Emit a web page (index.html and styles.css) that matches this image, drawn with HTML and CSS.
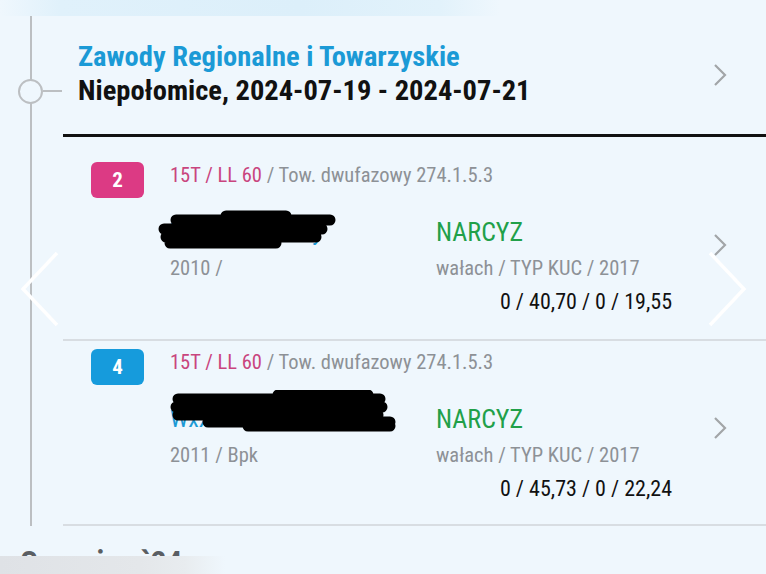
FILE: index.html
```html
<!DOCTYPE html>
<html lang="pl">
<head>
<meta charset="utf-8">
<link rel="stylesheet" href="styles.css">
</head>
<body>
<div class="topfade"></div>
<section class="group">
  <span class="node"></span>
  <header class="event">
    <div class="event-text">
      <div class="event-title">Zawody Regionalne i Towarzyskie</div>
      <div class="event-place">Niepołomice, 2024-07-19 - 2024-07-21</div>
    </div>
    <svg class="chev" viewBox="0 0 14 24" width="14" height="24"><polyline points="2,2 12,12 2,22"/></svg>
  </header>
  <article class="card card-first">
    <div class="badge badge-pink">2</div>
    <div class="card-body">
      <div class="meta"><span class="cls">15T / LL 60</span> / Tow. dwufazowy 274.1.5.3</div>
      <div class="cols">
        <div class="col-left">
          <div class="rider"><span class="rider-name">Wxxxxxxx Kxxxy</span>
            <svg class="redact" viewBox="0 0 180 40" width="180" height="40"><path d="M20 10 H174 M8 19 H166 M10 27 H160 M14 33 H120 M70 6 H130"/></svg>
          </div>
          <div class="sub">2010 /</div>
        </div>
        <div class="col-right">
          <div class="horse">NARCYZ</div>
          <div class="sub">wałach / TYP KUC / 2017</div>
          <div class="score">0 / 40,70 / 0 / 19,55</div>
        </div>
      </div>
    </div>
    <svg class="chev" viewBox="0 0 14 24" width="14" height="24"><polyline points="2,2 12,12 2,22"/></svg>
  </article>
  <article class="card">
    <div class="badge badge-blue">4</div>
    <div class="card-body">
      <div class="meta"><span class="cls">15T / LL 60</span> / Tow. dwufazowy 274.1.5.3</div>
      <div class="cols">
        <div class="col-left">
          <div class="rider"><span class="rider-name">Wxxxxxxxxx Kxxxxxxz</span>
            <svg class="redact redact-wide" viewBox="0 0 230 44" width="230" height="44"><path d="M10 9 H212 M8 17 H214 M10 25 H210 M40 32 H222 M80 36 H222 M110 5 H200"/></svg>
          </div>
          <div class="sub">2011 / Bpk</div>
        </div>
        <div class="col-right">
          <div class="horse">NARCYZ</div>
          <div class="sub">wałach / TYP KUC / 2017</div>
          <div class="score">0 / 45,73 / 0 / 22,24</div>
        </div>
      </div>
    </div>
    <svg class="chev" viewBox="0 0 14 24" width="14" height="24"><polyline points="2,2 12,12 2,22"/></svg>
  </article>
</section>
<h2 class="month">Czerwiec `24</h2>
<svg class="nav nav-prev" viewBox="0 0 40 76" width="40" height="76"><polyline points="37,2 3,38 37,74"/></svg>
<svg class="nav nav-next" viewBox="0 0 40 76" width="40" height="76"><polyline points="3,2 37,38 3,74"/></svg>
<div class="bottomfade"></div>
</body>
</html>
```
FILE: styles.css
```css
html, body {
  margin: 0;
  padding: 0;
}
body {
  width: 766px;
  height: 574px;
  overflow: hidden;
  background: #eff7fd;
  font-family: Roboto, "Noto Sans", sans-serif;
  font-stretch: 80%;
  color: #111;
  position: relative;
}
.topfade {
  height: 16px;
  background: linear-gradient(90deg, rgba(223,240,250,0) 0, #e0f1fb 60px, #dceffa 300px, #e2f2fb 440px, rgba(223,240,250,0) 500px);
}
.group {
  position: relative;
  margin-left: 30px;
  border-left: 2px solid #bcbfc2;
  padding-left: 31px;
}
.node {
  position: absolute;
  left: -14px;
  top: 63px;
  width: 21px;
  height: 21px;
  border: 2px solid #bcbfc2;
  border-radius: 50%;
  background: #eff7fd;
}
.node::after {
  content: "";
  position: absolute;
  left: 23px;
  top: 9px;
  width: 19px;
  height: 2px;
  background: #bcbfc2;
}
.event {
  display: flex;
  align-items: center;
  height: 118px;
  padding-left: 15px;
  border-bottom: 3px solid #111;
  box-sizing: content-box;
}
.event-text {
  flex: 1;
  padding-bottom: 2px;
}
.event-title {
  font-size: 28.5px;
  font-weight: 700;
  color: #1b9ad6;
  line-height: 34px;
}
.event-place {
  font-size: 28.5px;
  font-weight: 700;
  color: #111;
  line-height: 34px;
}
.chev {
  flex: none;
  margin-right: 39px;
  fill: none;
  stroke: #a2a5a8;
  stroke-width: 2.2;
}
.card {
  display: flex;
  align-items: center;
  padding: 8px 0 18px 28px;
  border-bottom: 2px solid #d8dde2;
}
.card-first {
  padding-top: 25px;
  padding-bottom: 20px;
}
.card-first .chev {
  margin-top: 8px;
}
.badge {
  flex: none;
  align-self: flex-start;
  width: 53px;
  height: 36px;
  border-radius: 6px;
  color: #fff;
  font-size: 21px;
  font-weight: 700;
  display: flex;
  align-items: center;
  justify-content: center;
}
.badge-pink { background: #dc3a84; }
.badge-blue { background: #169bdc; }
.card-body {
  flex: 1;
  padding-left: 26px;
}
.meta {
  font-size: 20.5px;
  color: #8d9196;
  line-height: 26px;
}
.cls { color: #c9457e; }
.cols {
  display: flex;
  margin-top: 25px;
}
.col-left {
  width: 266px;
}
.col-right {
  width: 236px;
}
.rider {
  position: relative;
  height: 38px;
  display: flex;
  align-items: center;
}
.rider-name {
  font-size: 24px;
  color: #1b9ad6;
}
.redact {
  position: absolute;
  left: -14px;
  top: -3px;
  fill: none;
  stroke: #000;
  stroke-width: 11;
  stroke-linecap: round;
}
.redact-wide {
  left: -2px;
  top: -10px;
}
.horse {
  font-size: 26px;
  color: #21a049;
  height: 38px;
  display: flex;
  align-items: center;
}
.sub {
  font-size: 20.5px;
  color: #8d9196;
  line-height: 34px;
}
.score {
  font-size: 22px;
  color: #111;
  text-align: right;
  line-height: 34px;
}
.month {
  margin: 18px 0 0 20px;
  font-size: 31px;
  font-weight: 700;
  color: #5a5e63;
}
.nav {
  position: absolute;
  top: 251px;
  fill: none;
  stroke: #fff;
  stroke-width: 3.5;
}
.nav-prev { left: 20px; }
.nav-next { left: 707px; }
.bottomfade {
  position: absolute;
  left: 0;
  bottom: 0;
  width: 766px;
  height: 18px;
  background: linear-gradient(90deg, #dfe2e6 0, #e4e7ea 140px, #e8ecef 185px, rgba(239,247,253,0) 225px);
}
```
